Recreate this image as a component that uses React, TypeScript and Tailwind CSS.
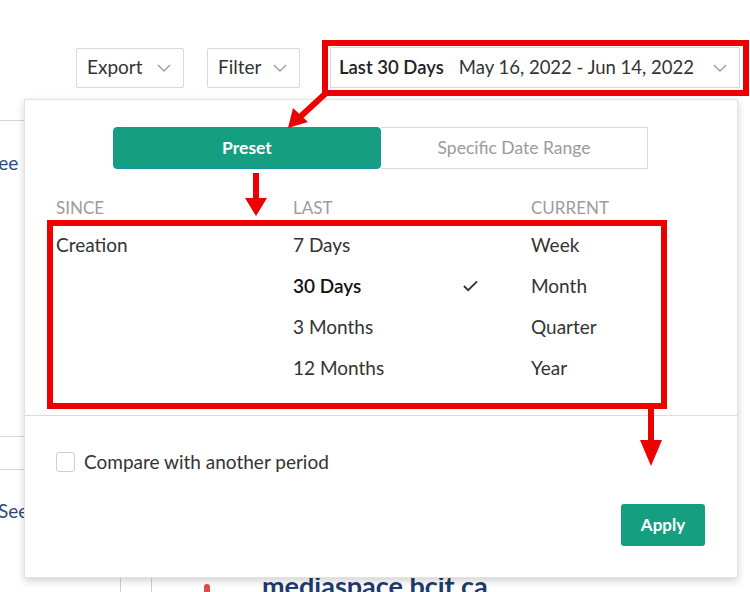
import React from 'react';

const Chevron = ({ className = '' }: { className?: string }) => (
  <svg viewBox="0 0 14 8" className={`w-[14px] h-[8px] ${className}`} fill="none" stroke="#9aa0a6" strokeWidth="1.4">
    <polyline points="1,1 7,7 13,1" />
  </svg>
);

const ToolButton: React.FC<{ label: React.ReactNode; className?: string }> = ({ label, className = '' }) => (
  <div className={`h-[40px] flex items-center justify-between border border-[#d9d9d9] rounded-[2px] bg-white pl-[10px] pr-[12px] text-[19px] text-[#333] ${className}`}>
    <span>{label}</span>
    <Chevron />
  </div>
);

const lastOptions = ['7 Days', '30 Days', '3 Months', '12 Months'];
const currentOptions = ['Week', 'Month', 'Quarter', 'Year'];

const App: React.FC = () => {
  return (
    <div className="relative w-[750px] h-[592px] overflow-hidden bg-white font-['Lato','Open_Sans',sans-serif] text-[#333]">
      {/* toolbar */}
      <div className="flex items-center pt-[47px] pl-[76px] gap-[23px]">
        <ToolButton label="Export" className="w-[108px]" />
        <ToolButton label="Filter" className="w-[93px]" />
        <div className="ml-[7px] w-[410px] h-[41px] flex items-center justify-between border border-[#d9d9d9] bg-white pl-[8px] pr-[12px] text-[18.5px]">
          <span>
            <span className="font-semibold text-[#222]">Last 30 Days</span>
            <span className="ml-[15px] text-[#333]">May 16, 2022 - Jun 14, 2022</span>
          </span>
          <Chevron />
        </div>
      </div>

      {/* page content behind the dropdown */}
      <div className="mt-[32px] w-[24px] border-t border-[#d6d6d6]">
        <div className="mt-[28px] -ml-[12px] text-[19px] text-[#2c4a78]">See</div>
      </div>
      <div className="mt-[258px] w-[24px] border-t border-[#d6d6d6]" />
      <div className="mt-[32px] w-[24px] border-t border-[#d6d6d6]">
        <div className="mt-[27px] -ml-[2px] text-[19px] text-[#2c4a78]">See</div>
      </div>
      <div className="absolute left-0 top-[578px] w-[750px] h-[20px] flex items-start">
        <div className="ml-[120px] w-[32px] h-[20px] border-x border-[#cfcfcf]" />
        <div className="ml-[52px] mt-[6px] w-[6px] h-[14px] bg-[#e04b4b] rounded-t-full" />
        <div className="ml-[52px] -mt-[6px] text-[27px] font-bold text-[#1e3a6e] leading-none">mediaspace.bcit.ca</div>
      </div>

      {/* dropdown */}
      <div className="absolute left-[24px] top-[99px] w-[714px] h-[479px] bg-white border border-[#e2e2e2] shadow-[0_3px_8px_rgba(0,0,0,0.18)] flex flex-col">
        <div className="flex pt-[27px] pl-[88px]">
          <div className="flex w-[535px] h-[42px]">
            <div className="w-[268px] flex items-center justify-center rounded-[4px] bg-[#159e80] border border-[#1a8fb0] text-white font-bold text-[17.5px]">Preset</div>
            <div className="flex-1 flex items-center justify-center border border-[#d9d9d9] border-l-0 text-[#9a9a9a] text-[17.5px]">Specific Date Range</div>
          </div>
        </div>

        <div className="grid grid-cols-[237px_170px_1fr] pl-[31px] pt-[27px] text-[17px] leading-[24px] text-[#9c9c9c] uppercase">
          <div>Since</div>
          <div>Last</div>
          <div className="pl-[68px]">Current</div>
        </div>

        <div className="grid grid-cols-[237px_170px_1fr] pl-[31px] pt-[13px] text-[19px]">
          <div className="h-[24px] flex items-center text-[#333]">Creation</div>
          <div className="flex flex-col gap-[17px]">
            {lastOptions.map((o) => (
              <div key={o} className={`h-[24px] flex items-center ${o === '30 Days' ? 'font-semibold text-[#111]' : 'text-[#333]'}`}>
                {o}
              </div>
            ))}
          </div>
          <div className="flex flex-col gap-[17px]">
            {currentOptions.map((o, i) => (
              <div key={o} className="h-[24px] flex items-center text-[#333]">
                <span className="w-[68px] flex justify-start">
                  {i === 1 && (
                    <svg viewBox="0 0 16 12" className="w-[15px] h-[12px]" fill="none" stroke="#333" strokeWidth="2">
                      <polyline points="1,6 5.5,10.5 15,1" />
                    </svg>
                  )}
                </span>
                {o}
              </div>
            ))}
          </div>
        </div>

        <div className="mt-[35px] border-t border-[#dcdcdc]" />

        <div className="flex items-center pl-[31px] pt-[32px] gap-[9px]">
          <div className="w-[19px] h-[20px] border border-[#cfcfcf] rounded-[3px] bg-white" />
          <span className="text-[19px] text-[#333]">Compare with another period</span>
        </div>

        <div className="flex justify-end pr-[32px] pt-[27px]">
          <div className="w-[84px] h-[42px] flex items-center justify-center rounded-[3px] bg-[#159e80] text-white font-bold text-[17px]">Apply</div>
        </div>
      </div>

      {/* red annotations */}
      <div className="absolute left-[322px] top-[40px] w-[427px] h-[56px] border-[6px] border-[#ee0000]" />
      <div className="absolute left-[47px] top-[220px] w-[620px] h-[189px] border-[6px] border-[#ee0000]" />
      <svg className="absolute left-0 top-0 w-[750px] h-[592px] pointer-events-none" viewBox="0 0 750 592">
        <line x1="325" y1="94" x2="300" y2="117" stroke="#ee0000" strokeWidth="6" />
        <polygon points="288,128 293,108 308,122" fill="#ee0000" />
        <rect x="253" y="173" width="6" height="27" fill="#ee0000" />
        <polygon points="245,198 267,198 256,216" fill="#ee0000" />
        <rect x="648" y="408" width="6" height="36" fill="#ee0000" />
        <polygon points="640,440 662,440 651,466" fill="#ee0000" />
      </svg>
    </div>
  );
};

export default App;
